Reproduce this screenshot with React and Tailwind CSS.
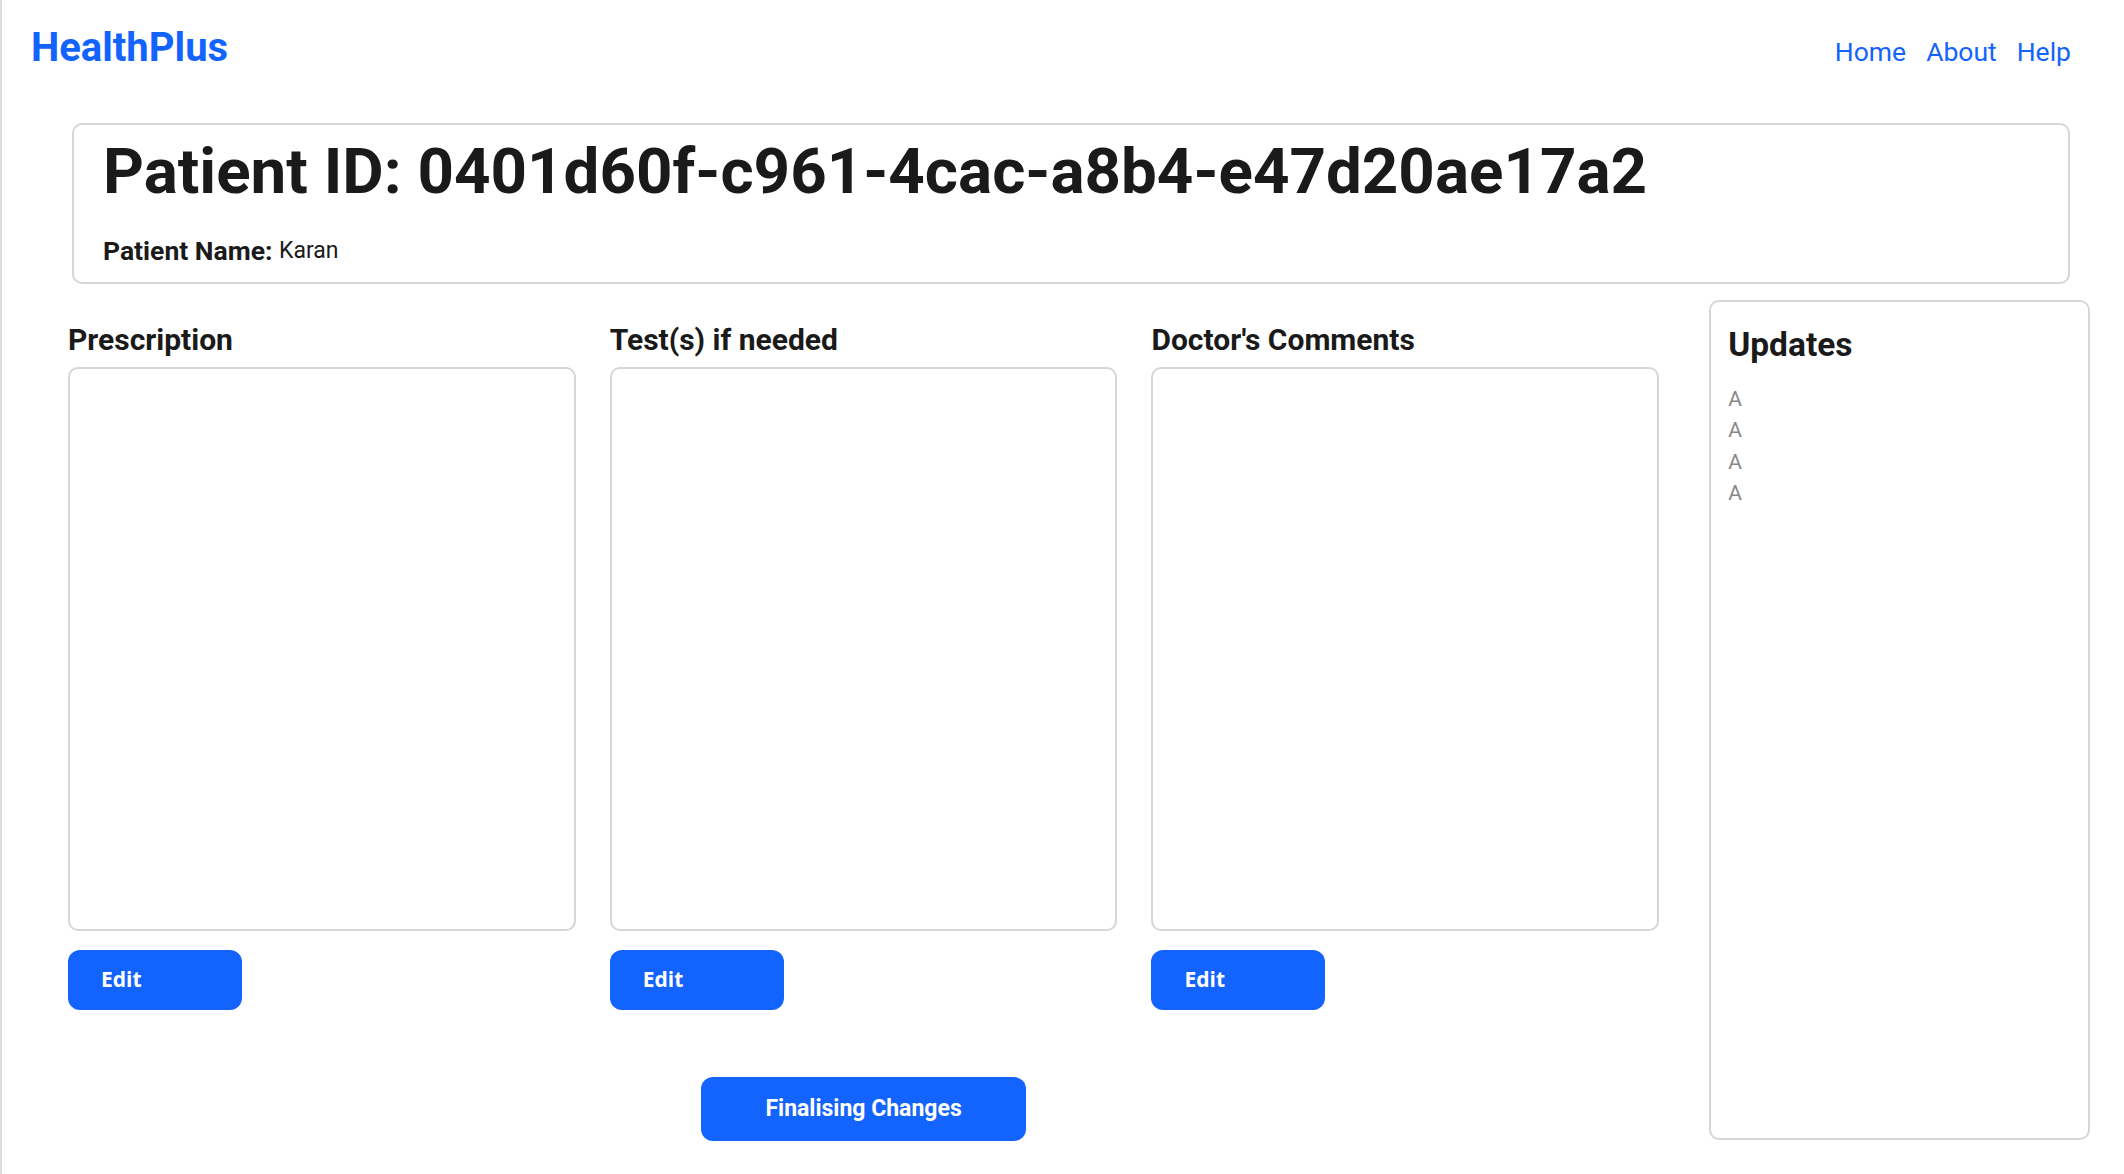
import React from 'react';

const columns = ['Prescription', 'Test(s) if needed', "Doctor's Comments"];
const updates = ['A', 'A', 'A', 'A'];

const Column = ({ title }) => (
  <div className="flex flex-col items-start">
    <h2 className="text-[30px] leading-none font-bold text-[#1a1a1a]">{title}</h2>
    <div className="mt-[12px] w-full h-[564px] border-2 border-[#d6d6d6] rounded-[10px] bg-white" />
    <button className="mt-[19px] w-[174px] h-[60px] rounded-[12px] bg-[#1363ff] text-white text-left pl-[33px] text-[21px] font-bold font-['Open_Sans',sans-serif]">
      Edit
    </button>
  </div>
);

const App = () => {
  return (
    <div className="min-h-screen bg-white border-l-2 border-[#dcdcdc] font-['Roboto',sans-serif] text-[#1a1a1a]">
      <header className="flex items-baseline justify-between pl-[29px] pr-[53px] pt-[28px]">
        <div className="text-[40px] leading-none font-bold text-[#1363ff]">HealthPlus</div>
        <nav className="flex gap-[20px] text-[26.5px] leading-none text-[#1363ff]">
          <a href="#">Home</a>
          <a href="#">About</a>
          <a href="#">Help</a>
        </nav>
      </header>

      <section className="mt-[55px] ml-[70px] mr-[54px] border-2 border-[#d6d6d6] rounded-[10px] px-[29px] pt-[15px] pb-[18px]">
        <h1 className="text-[63.7px] leading-none font-bold">Patient ID: 0401d60f-c961-4cac-a8b4-e47d20ae17a2</h1>
        <p className="mt-[34px] text-[26.5px] leading-none">
          <span className="font-bold">Patient Name: </span>
          <span className="text-[23px] align-[2px]">Karan</span>
        </p>
      </section>

      <main className="flex items-start mt-[16px] pl-[66px] pr-[34px]">
        <div className="w-[1592px] pt-[25px]">
          <div className="grid grid-cols-3 gap-[34px]">
            {columns.map((c) => (
              <Column key={c} title={c} />
            ))}
          </div>
          <div className="flex justify-center mt-[67px]">
            <button className="w-[325px] h-[64px] rounded-[12px] bg-[#1363ff] text-white text-[23px] font-bold">
              Finalising Changes
            </button>
          </div>
        </div>

        <aside className="ml-[50px] w-[381px] h-[840px] border-2 border-[#d6d6d6] rounded-[10px] px-[17px] pt-[26px]">
          <h3 className="text-[33.5px] leading-none font-bold">Updates</h3>
          <ul className="mt-[22px] text-[21px] leading-[31.5px] text-[#888]">
            {updates.map((u, i) => (
              <li key={i}>{u}</li>
            ))}
          </ul>
        </aside>
      </main>
    </div>
  );
};

export default App;
